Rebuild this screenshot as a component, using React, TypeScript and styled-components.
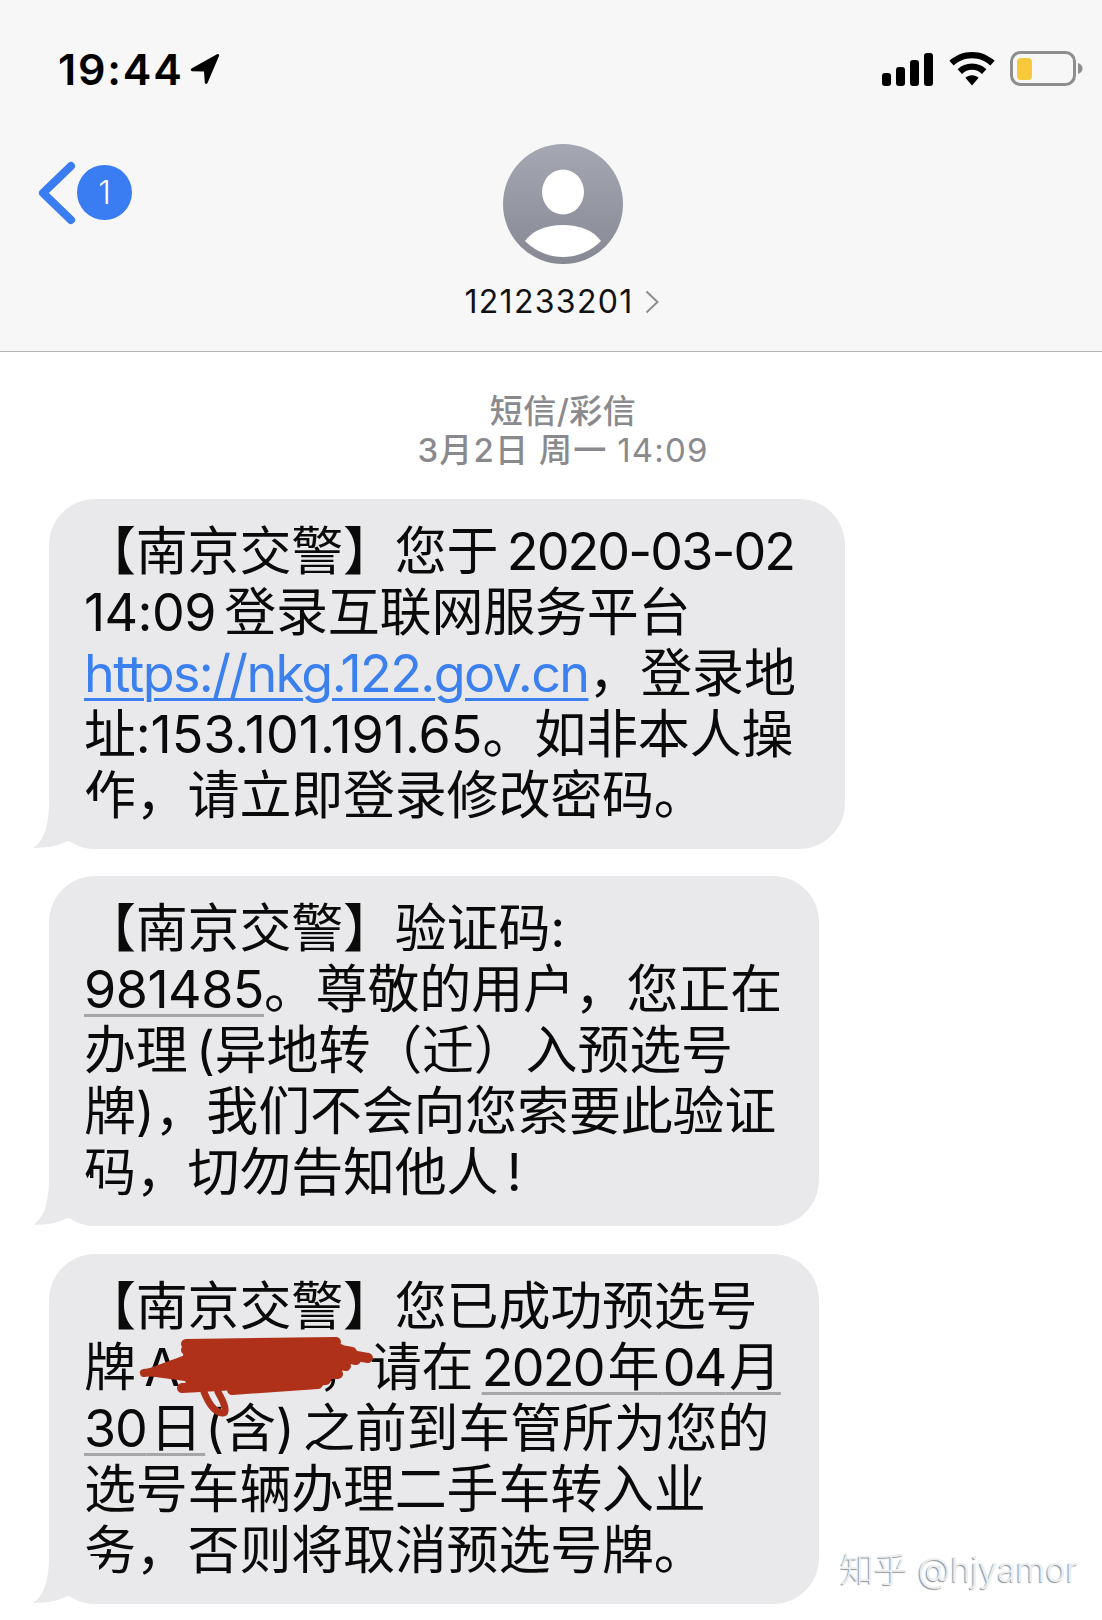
import React from "react";
import styled, { createGlobalStyle } from "styled-components";

const Global = createGlobalStyle`
  html, body { margin: 0; padding: 0; background: #fff; }
  * { box-sizing: border-box; }
`;

const FONT = `Inter, "Noto Sans CJK SC", sans-serif`;

const Page = styled.div`
  position: relative;
  width: 1102px;
  height: 1620px;
  overflow: hidden;
  background: #fff;
  font-family: ${FONT};
`;

const Header = styled.header`
  height: 352px;
  background: #f7f7f7;
  border-bottom: 1px solid #b4b4b4;
  display: flex;
  flex-direction: column;
`;

const StatusBar = styled.div`
  display: flex;
  align-items: center;
  justify-content: space-between;
  height: 34px;
  margin-top: 52px;
  padding: 0 19px 0 58px;
`;

const TimeGroup = styled.div`
  display: flex;
  align-items: center;
  gap: 6px;
`;

const Time = styled.span`
  font-size: 43px;
  font-weight: 600;
  line-height: 34px;
  color: #000;
  letter-spacing: 1.8px;
`;

const StatusIcons = styled.div`
  display: flex;
  align-items: center;
  gap: 15px;
`;

const NavBar = styled.div`
  display: grid;
  grid-template-columns: 1fr auto 1fr;
  align-items: start;
  margin-top: 58px;
  padding-left: 37px;
`;

const BackLink = styled.div`
  display: flex;
  align-items: center;
  margin-top: 17px;
`;

const Badge = styled.span`
  width: 55px;
  height: 55px;
  border-radius: 50%;
  background: #3a7cf2;
  color: #fff;
  font-size: 32px;
  font-weight: 300;
  display: flex;
  align-items: center;
  justify-content: center;
  margin: -2px 0 0 0;
`;

const Contact = styled.div`
  display: flex;
  flex-direction: column;
  align-items: center;
  transform: translateX(-6px);
`;

const NameRow = styled.div`
  display: flex;
  align-items: center;
  gap: 11px;
  margin-top: 18px;
  padding-right: 4px;
`;

const Name = styled.span`
  font-size: 32px;
  line-height: 40px;
  font-weight: 400;
  color: #111;
  letter-spacing: 1.3px;
`;

const Thread = styled.main`
  padding: 40px 0 0 49px;
  display: flex;
  flex-direction: column;
  align-items: flex-start;
`;

const Meta = styled.div`
  align-self: stretch;
  margin-left: -49px;
  text-align: center;
  color: #8a8a8e;
  font-size: 33px;
  line-height: 39px;
  font-weight: 500;
  letter-spacing: 0.5px;
  transform: translateX(12px);
`;

const MetaDate = styled.div`
  letter-spacing: 1.15px;
`;

const MetaTime = styled.span`
  font-weight: 400;
`;

const Bubble = styled.div<{ $w: number; $mt: number }>`
  position: relative;
  width: ${(p) => p.$w}px;
  height: 350px;
  margin-top: ${(p) => p.$mt}px;
  padding: 22px 0 0 35px;
  background: #e9e9eb;
  border-radius: 46px;
  font-size: 52px;
  line-height: 61px;
  color: #0a0a0a;
  white-space: nowrap;
`;

const Line = styled.div`
  display: block;
  letter-spacing: -0.2px;
  word-spacing: -6px;
`;

const Num = styled.span<{ $ls: number }>`
  letter-spacing: ${(p) => p.$ls}px;
`;

const LinkText = styled.span`
  color: #3b80ee;
  text-decoration: underline;
  text-decoration-thickness: 3px;
  text-underline-offset: 6px;
  letter-spacing: -1.6px;
`;

const Detected = styled.span`
  text-decoration: underline;
  text-decoration-color: #a6a6a8;
  text-decoration-thickness: 3px;
  text-underline-offset: 6px;
  word-spacing: -11px;
`;

const Covered = styled.span`
  display: inline-block;
  width: 138px;
`;

const Tail = styled.svg`
  position: absolute;
  left: -16px;
  bottom: 0;
`;

const Scribble = styled.svg`
  position: absolute;
  left: 0;
  top: 76px;
`;

const Watermark = styled.div`
  position: absolute;
  left: 840px;
  top: 1548px;
  font-size: 34px;
  line-height: 44px;
  font-weight: 300;
  color: #eceef0;
  text-shadow: -1px 1px 1px #8f8f8f;
  white-space: nowrap;
`;

const BubbleTail = () => (
  <Tail width="66" height="50" viewBox="0 0 66 50">
    <path d="M16 2C16 31 9 43 0 49C17 49 27 46 37 41C43 46 51 50 66 50L66 2Z" fill="#e9e9eb" />
  </Tail>
);

const RED = "#b0311a";
const strokes = [
  "M186 14L336 12",
  "M186 20L340 19",
  "M188 26L344 25",
  "M188 32L340 31",
  "M188 38L338 38",
  "M190 44L338 44",
  "M190 50L326 48",
  "M182 58L326 50",
  "M232 60L318 54",
  "M320 22L356 30",
  "M330 18L352 22",
  "M336 34L346 36",
  "M345 24L368 28",
];

export default function App() {
  return (
    <Page>
      <Global />
      <Header>
        <StatusBar>
          <TimeGroup>
            <Time>19:44</Time>
            <svg width="30" height="32" viewBox="0 0 30 32">
              <path d="M1.5 15.5L27 1.2C28.4.5 29.6 1.6 29 3L17.5 30C16.8 31.4 15 31.2 14.8 29.6L14 18.4L2.2 18.2C.6 18.1.2 16.3 1.5 15.5Z" fill="#000" />
            </svg>
          </TimeGroup>
          <StatusIcons>
            <svg width="52" height="33" viewBox="0 0 52 33" fill="#000">
              <rect x="0" y="20" width="9" height="13" rx="3" />
              <rect x="14" y="14" width="9" height="19" rx="3" />
              <rect x="28" y="7" width="9" height="26" rx="3" />
              <rect x="42" y="0" width="9" height="33" rx="3" />
            </svg>
            <svg width="46" height="34" viewBox="0 0 46 34">
              <path d="M23 0C31.8 0 39.6 3.4 45.6 8.8L41.4 13.4C36.6 9 30.2 6.2 23 6.2C15.8 6.2 9.4 9 4.6 13.4L.4 8.8C6.4 3.4 14.2 0 23 0Z" fill="#000" />
              <path d="M23 11.6C28.6 11.6 33.6 13.8 37.4 17.2L33 21.9C30.4 19.4 26.8 17.8 23 17.8C19.2 17.8 15.6 19.4 13 21.9L8.6 17.2C12.4 13.8 17.4 11.6 23 11.6Z" fill="#000" />
              <path d="M23 23.2C25.6 23.2 27.8 24.2 29.6 25.8L23 33.6L16.4 25.8C18.2 24.2 20.4 23.2 23 23.2Z" fill="#000" />
            </svg>
            <svg width="73" height="36" viewBox="0 0 73 36">
              <rect x="1.5" y="1.5" width="63" height="32" rx="9" fill="#f7f7f7" stroke="#8e8e8e" strokeWidth="3" />
              <rect x="7" y="7" width="15" height="22" rx="4" fill="#f8c93a" />
              <path d="M68 12C71 13 72.5 15 72.5 17.5C72.5 20 71 22 68 23Z" fill="#8e8e8e" />
            </svg>
          </StatusIcons>
        </StatusBar>
        <NavBar>
          <BackLink>
            <svg width="40" height="64" viewBox="0 0 40 64">
              <path d="M34 5L6 32L34 59" fill="none" stroke="#3a7cf2" strokeWidth="8" strokeLinecap="round" strokeLinejoin="round" />
            </svg>
            <Badge>1</Badge>
          </BackLink>
          <Contact>
            <svg width="120" height="120" viewBox="0 0 120 120">
              <defs>
                <linearGradient id="avatarFill" x1="0" y1="0" x2="0" y2="1">
                  <stop offset="0" stopColor="#a5a8b2" />
                  <stop offset="1" stopColor="#868993" />
                </linearGradient>
              </defs>
              <circle cx="60" cy="60" r="60" fill="url(#avatarFill)" />
              <ellipse cx="60" cy="48" rx="21" ry="22.5" fill="#fff" />
              <path d="M22 97C30 86 44 81 60 81C76 81 90 86 98 97C88 107 75 113 60 113C45 113 32 107 22 97Z" fill="#fff" />
            </svg>
            <NameRow>
              <Name>121233201</Name>
              <svg width="14" height="24" viewBox="0 0 14 24">
                <path d="M1.5 1.5L12.5 12L1.5 22.5" fill="none" stroke="#8d8d90" strokeWidth="2" />
              </svg>
            </NameRow>
          </Contact>
          <span />
        </NavBar>
      </Header>
      <Thread>
        <Meta>
          <div>短信/彩信</div>
          <MetaDate>3月2日 周一 <MetaTime>14:09</MetaTime></MetaDate>
        </Meta>
        <Bubble $w={796} $mt={29}>
          <Line>【南京交警】您于 <Num $ls={-1.9}>2020-03-02</Num></Line>
          <Line><Num $ls={-0.6}>14:09</Num> 登录互联网服务平台</Line>
          <Line><LinkText>https://nkg.122.gov.cn</LinkText>，登录地</Line>
          <Line>址:<Num $ls={0}>153.101.191.65</Num>。如非本人操</Line>
          <Line>作，请立即登录修改密码。</Line>
          <BubbleTail />
        </Bubble>
        <Bubble $w={770} $mt={27}>
          <Line>【南京交警】验证码:</Line>
          <Line><Detected><Num $ls={-0.5}>981485</Num></Detected>。尊敬的用户，您正在</Line>
          <Line>办理 (异地转（迁）入预选号</Line>
          <Line>牌)，我们不会向您索要此验证</Line>
          <Line>码，切勿告知他人 !</Line>
          <BubbleTail />
        </Bubble>
        <Bubble $w={770} $mt={28}>
          <Line>【南京交警】您已成功预选号</Line>
          <Line>牌 A<Covered />，请在 <Detected><Num $ls={-1.7}>2020</Num> 年 <Num $ls={-1.7}>04</Num> 月</Detected></Line>
          <Line><Detected><Num $ls={-1.2}>30</Num> 日 </Detected>(含) 之前到车管所为您的</Line>
          <Line>选号车辆办理二手车转入业</Line>
          <Line>务，否则将取消预选号牌。</Line>
          <Scribble width="340" height="100" viewBox="49 0 340 100">
            <path d="M139 42L188 24L192 52L148 46Z" fill={RED} />
            {strokes.map((d) => (
              <path key={d} d={d} stroke={RED} strokeWidth="10" strokeLinecap="round" fill="none" />
            ))}
            <path d="M144 43L186 38" stroke={RED} strokeWidth="8" strokeLinecap="round" fill="none" />
            <path d="M204 62C208 72 214 82 222 83C228 84 225 74 218 62" stroke={RED} strokeWidth="7" strokeLinecap="round" fill="none" />
          </Scribble>
          <BubbleTail />
        </Bubble>
      </Thread>
      <Watermark>知乎 @hjyamor</Watermark>
    </Page>
  );
}
